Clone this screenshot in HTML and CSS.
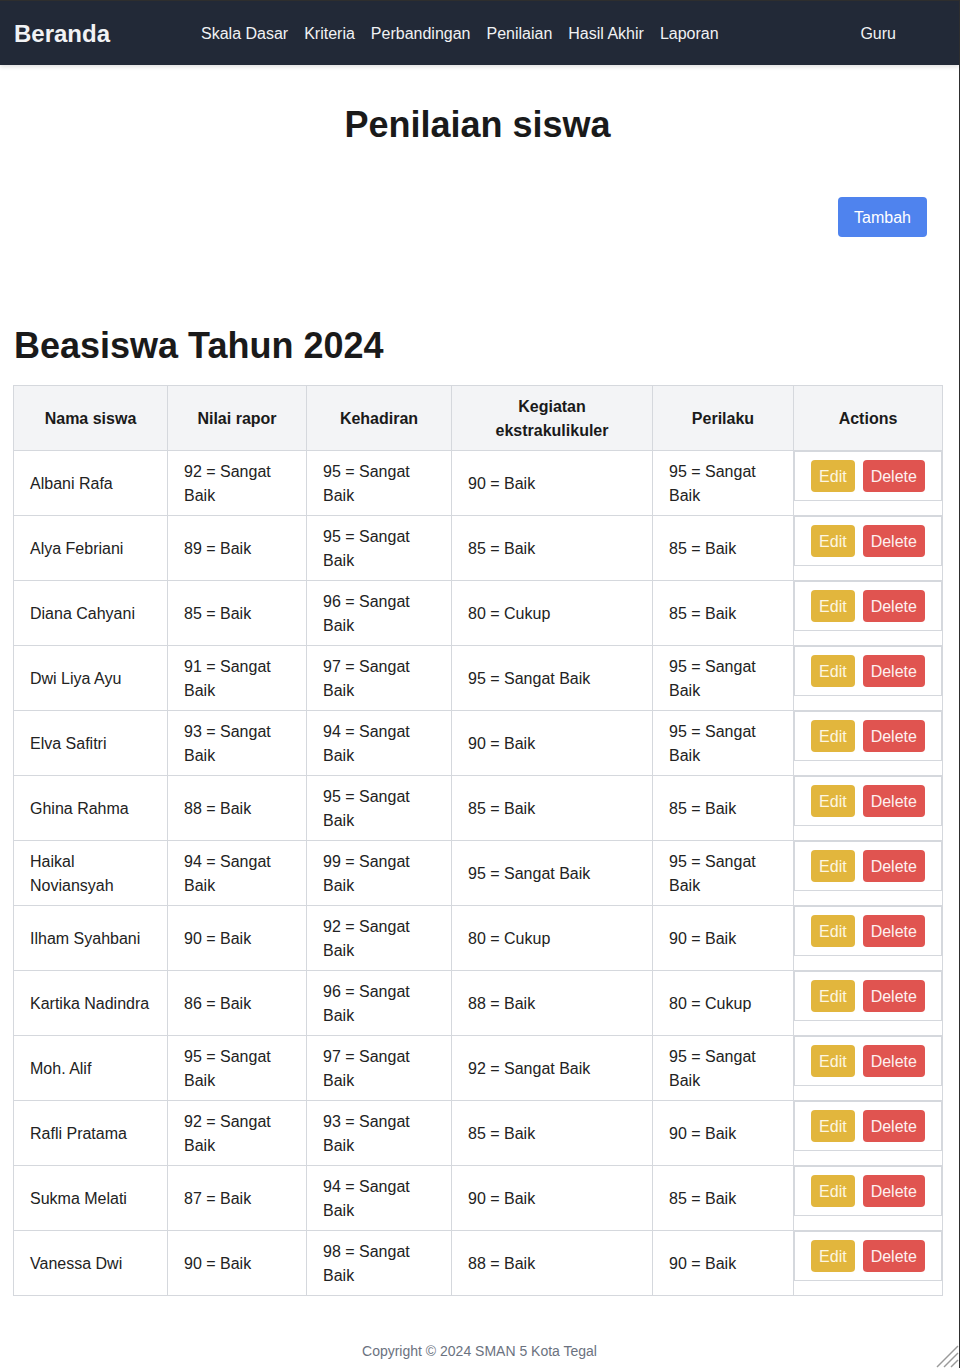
FILE: index.html
```html
<!DOCTYPE html>
<html lang="id">
<head>
<meta charset="utf-8">
<title>Penilaian siswa</title>
<link rel="stylesheet" href="styles.css">
</head>
<body>
<div class="frame">
  <nav class="navbar">
    <a class="brand" href="#">Beranda</a>
    <div class="nav-links">
      <a href="#">Skala Dasar</a>
      <a href="#">Kriteria</a>
      <a href="#">Perbandingan</a>
      <a href="#">Penilaian</a>
      <a href="#">Hasil Akhir</a>
      <a href="#">Laporan</a>
    </div>
    <a class="nav-user" href="#">Guru</a>
  </nav>

  <main class="content">
    <h1 class="page-title">Penilaian siswa</h1>
    <div class="toolbar">
      <button class="btn btn-blue">Tambah</button>
    </div>
    <h2 class="section-title">Beasiswa Tahun 2024</h2>

    <table class="data-table">
      <colgroup>
        <col class="c1"><col class="c2"><col class="c3"><col class="c4"><col class="c5"><col class="c6">
      </colgroup>
      <thead>
        <tr>
          <th>Nama siswa</th>
          <th>Nilai rapor</th>
          <th>Kehadiran</th>
          <th>Kegiatan ekstrakulikuler</th>
          <th>Perilaku</th>
          <th>Actions</th>
        </tr>
      </thead>
      <tbody>
        <tr><td>Albani Rafa</td><td>92 = Sangat Baik</td><td>95 = Sangat Baik</td><td>90 = Baik</td><td>95 = Sangat Baik</td><td class="actions"><div class="action-box"><button class="btn btn-edit">Edit</button><button class="btn btn-delete">Delete</button></div></td></tr>
        <tr><td>Alya Febriani</td><td>89 = Baik</td><td>95 = Sangat Baik</td><td>85 = Baik</td><td>85 = Baik</td><td class="actions"><div class="action-box"><button class="btn btn-edit">Edit</button><button class="btn btn-delete">Delete</button></div></td></tr>
        <tr><td>Diana Cahyani</td><td>85 = Baik</td><td>96 = Sangat Baik</td><td>80 = Cukup</td><td>85 = Baik</td><td class="actions"><div class="action-box"><button class="btn btn-edit">Edit</button><button class="btn btn-delete">Delete</button></div></td></tr>
        <tr><td>Dwi Liya Ayu</td><td>91 = Sangat Baik</td><td>97 = Sangat Baik</td><td>95 = Sangat Baik</td><td>95 = Sangat Baik</td><td class="actions"><div class="action-box"><button class="btn btn-edit">Edit</button><button class="btn btn-delete">Delete</button></div></td></tr>
        <tr><td>Elva Safitri</td><td>93 = Sangat Baik</td><td>94 = Sangat Baik</td><td>90 = Baik</td><td>95 = Sangat Baik</td><td class="actions"><div class="action-box"><button class="btn btn-edit">Edit</button><button class="btn btn-delete">Delete</button></div></td></tr>
        <tr><td>Ghina Rahma</td><td>88 = Baik</td><td>95 = Sangat Baik</td><td>85 = Baik</td><td>85 = Baik</td><td class="actions"><div class="action-box"><button class="btn btn-edit">Edit</button><button class="btn btn-delete">Delete</button></div></td></tr>
        <tr><td>Haikal Noviansyah</td><td>94 = Sangat Baik</td><td>99 = Sangat Baik</td><td>95 = Sangat Baik</td><td>95 = Sangat Baik</td><td class="actions"><div class="action-box"><button class="btn btn-edit">Edit</button><button class="btn btn-delete">Delete</button></div></td></tr>
        <tr><td>Ilham Syahbani</td><td>90 = Baik</td><td>92 = Sangat Baik</td><td>80 = Cukup</td><td>90 = Baik</td><td class="actions"><div class="action-box"><button class="btn btn-edit">Edit</button><button class="btn btn-delete">Delete</button></div></td></tr>
        <tr><td>Kartika Nadindra</td><td>86 = Baik</td><td>96 = Sangat Baik</td><td>88 = Baik</td><td>80 = Cukup</td><td class="actions"><div class="action-box"><button class="btn btn-edit">Edit</button><button class="btn btn-delete">Delete</button></div></td></tr>
        <tr><td>Moh. Alif</td><td>95 = Sangat Baik</td><td>97 = Sangat Baik</td><td>92 = Sangat Baik</td><td>95 = Sangat Baik</td><td class="actions"><div class="action-box"><button class="btn btn-edit">Edit</button><button class="btn btn-delete">Delete</button></div></td></tr>
        <tr><td>Rafli Pratama</td><td>92 = Sangat Baik</td><td>93 = Sangat Baik</td><td>85 = Baik</td><td>90 = Baik</td><td class="actions"><div class="action-box"><button class="btn btn-edit">Edit</button><button class="btn btn-delete">Delete</button></div></td></tr>
        <tr><td>Sukma Melati</td><td>87 = Baik</td><td>94 = Sangat Baik</td><td>90 = Baik</td><td>85 = Baik</td><td class="actions"><div class="action-box"><button class="btn btn-edit">Edit</button><button class="btn btn-delete">Delete</button></div></td></tr>
        <tr><td>Vanessa Dwi</td><td>90 = Baik</td><td>98 = Sangat Baik</td><td>88 = Baik</td><td>90 = Baik</td><td class="actions"><div class="action-box"><button class="btn btn-edit">Edit</button><button class="btn btn-delete">Delete</button></div></td></tr>
      </tbody>
    </table>
  </main>

  <footer class="footer">Copyright © 2024 SMAN 5 Kota Tegal</footer>
</div>

<svg class="resize-grip" width="28" height="28" viewBox="0 0 28 28" aria-hidden="true">
  <line x1="27" y1="6" x2="6" y2="27" stroke="#9a9a9a" stroke-width="1.5"/>
  <line x1="27" y1="13" x2="13" y2="27" stroke="#9a9a9a" stroke-width="1.5"/>
  <line x1="27" y1="20" x2="20" y2="27" stroke="#9a9a9a" stroke-width="1.5"/>
</svg>
</body>
</html>
```

FILE: styles.css
```css
* { box-sizing: border-box; }

html, body {
  margin: 0;
  padding: 0;
  background: #ffffff;
}

body {
  font-family: "Liberation Sans", Arial, sans-serif;
  font-size: 16px;
  line-height: 24px;
  color: #1f1f1f;
  width: 960px;
  min-height: 1368px;
  border-top: 1px solid #2e2e2e;
  border-right: 1px solid #2e2e2e;
}

.frame {
  width: 959px;
}

.navbar {
  height: 64px;
  background: #222937;
  display: flex;
  align-items: center;
  padding: 2px 14px 0;
  box-shadow: 0 2px 4px rgba(0, 0, 0, 0.12);
}

.navbar a {
  color: #f1f2f4;
  text-decoration: none;
}

.brand {
  font-size: 24px;
  font-weight: bold;
  line-height: 32px;
  width: 187px;
}

.nav-links {
  display: flex;
  gap: 16px;
  flex: 1;
}

.nav-user {
  margin-right: 49px;
}

.content {
  padding: 0 17px 0 13px;
}

.page-title {
  margin: 40px 0 0;
  font-size: 36px;
  line-height: 40px;
  font-weight: bold;
  text-align: center;
  color: #1a1a1a;
}

.toolbar {
  display: flex;
  justify-content: flex-end;
  margin-top: 52px;
  padding-right: 15px;
}

.btn {
  font-family: "Liberation Sans", Arial, sans-serif;
  font-size: 16px;
  line-height: 24px;
  border: none;
  border-radius: 4px;
  color: #ffffff;
  cursor: pointer;
}

.btn-blue {
  background: #4f83ee;
  padding: 9px 16px 7px;
  height: 40px;
  width: 89px;
}

.section-title {
  margin: 89px 0 19px 1px;
  font-size: 36px;
  line-height: 40px;
  font-weight: bold;
  color: #1a1a1a;
}

.data-table {
  border-collapse: collapse;
  table-layout: fixed;
  width: 929px;
}

.c1 { width: 154px; }
.c2 { width: 139px; }
.c3 { width: 145px; }
.c4 { width: 201px; }
.c5 { width: 141px; }
.c6 { width: 149px; }

.data-table th,
.data-table td {
  border: 1px solid #d5d8dd;
  padding: 9px 16px 7px;
  vertical-align: middle;
}

.data-table th {
  background: #f3f4f6;
  font-weight: bold;
  text-align: center;
  height: 65px;
  color: #1a1a1a;
}

.data-table td {
  height: 65px;
  text-align: left;
  color: #222222;
}

.data-table td.actions {
  padding: 0;
  vertical-align: top;
}

.action-box {
  border: 1px solid #d5d8dd;
  padding: 8px;
  display: flex;
  justify-content: center;
  gap: 8px;
}

.btn-edit {
  background: #e2b63d;
  padding: 5px 8px 3px;
  height: 32px;
  color: #fdf6e3;
}

.btn-delete {
  background: #e05450;
  padding: 5px 8px 3px;
  height: 32px;
  color: #fdf0ef;
}

.footer {
  margin-top: 45px;
  text-align: center;
  font-size: 14px;
  line-height: 20px;
  color: #6b7280;
}

.resize-grip {
  position: fixed;
  right: 1px;
  bottom: 0;
}
```
